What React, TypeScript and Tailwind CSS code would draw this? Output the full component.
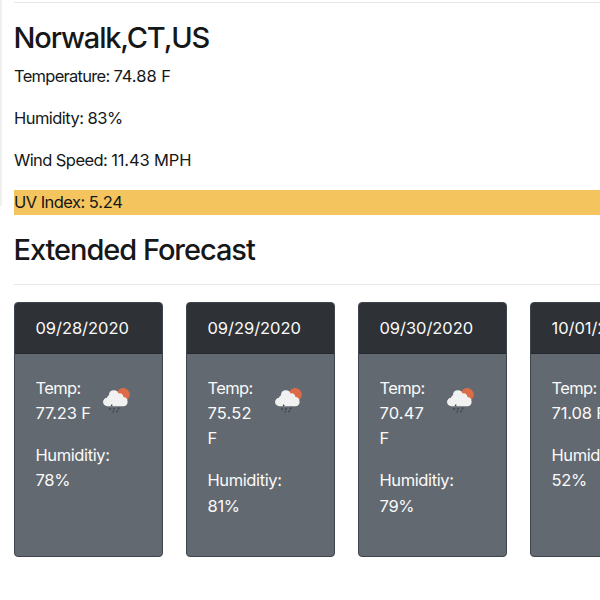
type Day = { date: string; temp: string[]; humidity: string };

const days: Day[] = [
  { date: '09/28/2020', temp: ['77.23 F'], humidity: '78%' },
  { date: '09/29/2020', temp: ['75.52', 'F'], humidity: '81%' },
  { date: '09/30/2020', temp: ['70.47', 'F'], humidity: '79%' },
  { date: '10/01/2020', temp: ['71.08 F'], humidity: '52%' },
];

function RainIcon() {
  return (
    <svg width="28" height="28" viewBox="0 0 28 28" className="mt-[11px] ml-[67.5px] block">
      <circle cx="20.2" cy="7.6" r="6.6" fill="#dc6b48" />
      <path
        d="M4.4 19.2a4.2 4.2 0 0 1-.3-8.4 3 3 0 0 1 1.9-2.6 4.9 4.9 0 0 1 9.5-1.7 3.5 3.5 0 0 1 4.8 3.6 4.6 4.6 0 0 1 .6 9.1Z"
        fill="#f1f1f1"
      />
      <path
        d="m9.1 17.7-.8 1.4M7.5 21l-1 1.8M11.5 21l-1 1.8M16.2 20.5l-1.1 1.8M10.6 24.2l-.8 1.3M14.5 23.7l-.9 1.5"
        stroke="#404247"
        strokeWidth="1.4"
      />
    </svg>
  );
}

function Card({ day }: { day: Day }) {
  return (
    <article className="h-[255px] w-[149px] shrink-0 overflow-hidden rounded-[4px] border border-[#3f454d] bg-[#636970] text-[#fafafa]">
      <header className="-mx-px -mt-px h-[52px] border-b border-[#25282d] bg-[#2e3136] pt-[14px] pl-[21.5px] tracking-[-0.05px]">
        {day.date}
      </header>
      <div className="grid pt-[22px] pl-[20.5px]">
        <div className="col-start-1 row-start-1 -mt-[0.2px]">
          <p className="mb-[16.9px] tracking-[-0.65px]">
            Temp:
            {day.temp.map((t) => (
              <span key={t} className={`block ${t.endsWith(' F') ? 'tracking-[-0.15px]' : 'tracking-[0.15px]'}`}>{t}</span>
            ))}
          </p>
          <p className="tracking-[-0.4px]">
            Humiditiy:
            <span className="block tracking-[-0.3px]">{day.humidity}</span>
          </p>
        </div>
        <div className="col-start-1 row-start-1">
          <RainIcon />
        </div>
      </div>
    </article>
  );
}

export default function App() {
  return (
    <div className="flex h-[600px] w-[600px] overflow-hidden bg-white font-['Inter',sans-serif] text-[16.5px] leading-[25.3px] text-[#151719]">
      <aside className="h-[206px] w-[2px] shrink-0 bg-[#f0f0f0]" />
      <main className="w-[598px] shrink-0 pt-[2px] pl-[12px]">
        <hr className="border-[#e8e8e8]" />
        <h2 className="-ml-[0.5px] mt-[18px] h-[42.5px] text-[29px] leading-[34px] font-medium tracking-[-1.15px] whitespace-nowrap">Norwalk,CT,US</h2>
        <div className="flex flex-col gap-[16.8px]">
          <p className="tracking-[-0.72px]">Temperature: <span className="tracking-[0px]">74.88 F</span></p>
          <p className="tracking-[-0.55px]">Humidity: <span className="tracking-[-0.4px]">83%</span></p>
          <p className="tracking-[-0.58px]">Wind Speed: <span className="tracking-[-0.15px]">11.43 MPH</span></p>
          <p className="bg-[#f4c55e] tracking-[-0.55px]">UV Index: <span className="tracking-[-0.2px]">5.24</span></p>
        </div>
        <h2 className="mt-[18px] -ml-[0.5px] text-[29px] leading-[34px] font-medium tracking-[-1.05px] whitespace-nowrap">Extended Forecast</h2>
        <hr className="mt-[16.8px] border-[#e8e8e8]" />
        <section className="mt-[17px] flex gap-[23px]">
          {days.map((d) => (
            <Card key={d.date} day={d} />
          ))}
        </section>
      </main>
    </div>
  );
}
